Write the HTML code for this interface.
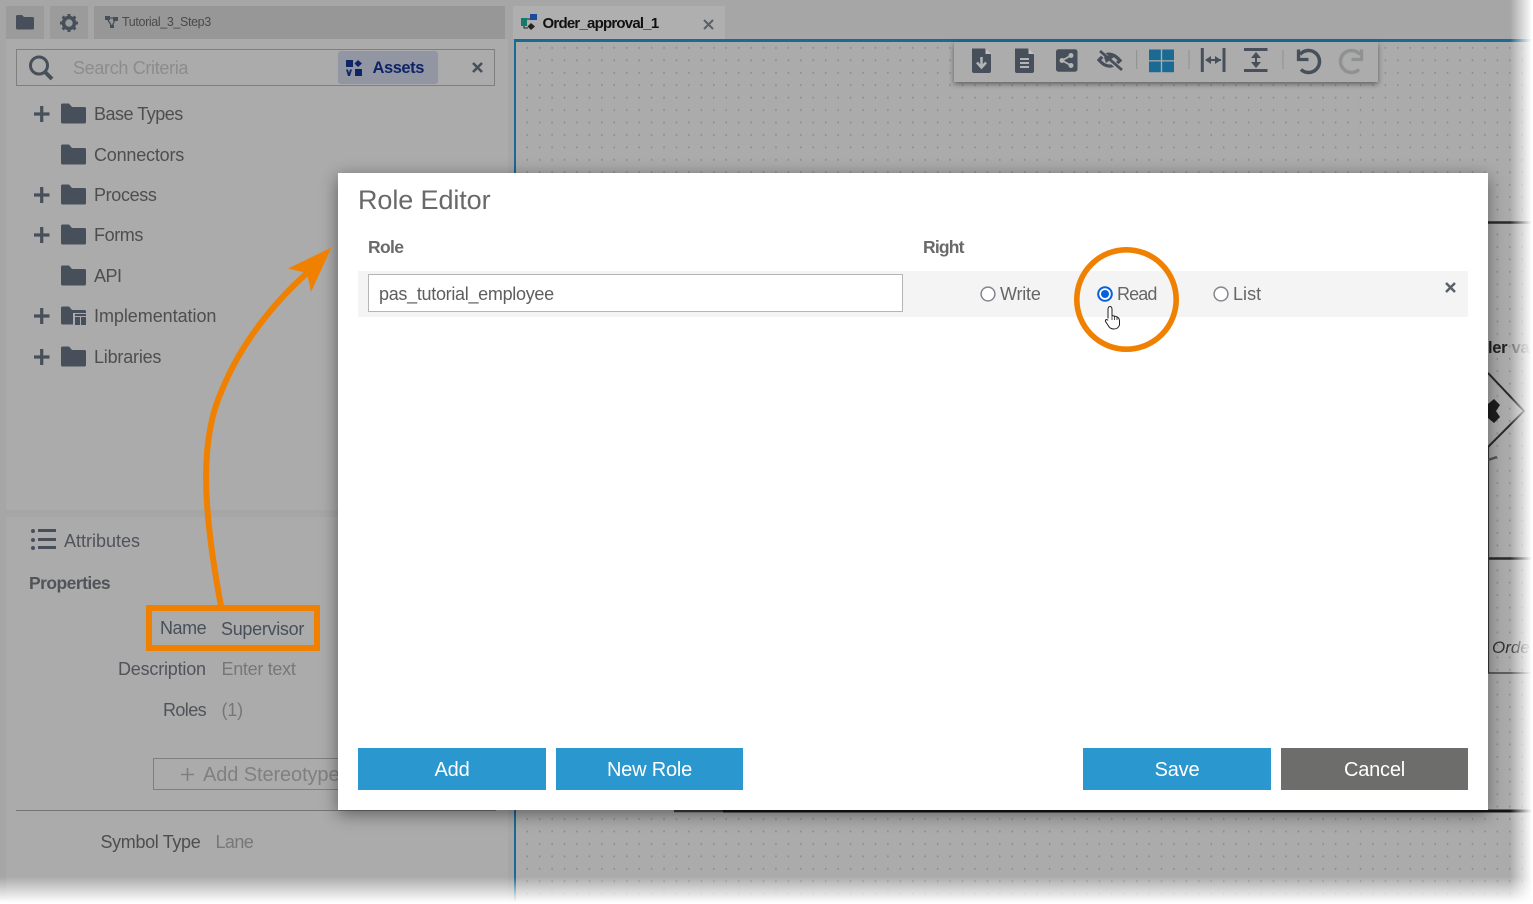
<!DOCTYPE html>
<html><head><meta charset="utf-8"><title>Role Editor</title>
<style>
*{box-sizing:border-box}
html,body{margin:0;padding:0}
body{width:1533px;height:904px;overflow:hidden;position:relative;background:#a6a6a6;font-family:"Liberation Sans",Arial,sans-serif;color:#4e4e4e}
.a{position:absolute;white-space:nowrap}
.t{position:absolute;white-space:nowrap;font-size:18px;line-height:22px;letter-spacing:-.2px}
svg{position:absolute;overflow:visible}
.btn{position:absolute;top:748px;height:42px;background:#2b97cf;color:#fff;font-size:20px;line-height:44px;text-align:center;letter-spacing:-.2px}
</style></head><body>

<!-- left panel -->
<div class="a" style="left:6px;top:39px;width:502px;height:471px;background:#ababab"></div>
<div class="a" style="left:6px;top:517px;width:502px;height:387px;background:#ababab"></div>
<div class="a" style="left:6px;top:6px;width:38px;height:33px;background:#9b9b9b"></div>
<div class="a" style="left:50px;top:6px;width:38px;height:33px;background:#9b9b9b"></div>
<div class="a" style="left:94px;top:6px;width:411px;height:33px;background:#979797"></div>
<svg style="left:16px;top:15px" width="18" height="15" viewBox="0 0 18 15"><path fill="#47505a" d="M0 1.5Q0 0 1.5 0H6L8 2H16.5Q18 2 18 3.5V13Q18 14.500 16.500 14.500H1.500Q0 14.500 0 13Z"/></svg>
<svg style="left:60px;top:14px" width="18" height="18" viewBox="0 0 18 18"><circle cx="9" cy="9" r="5.500" fill="none" stroke="#47505a" stroke-width="3.600"/><path stroke="#47505a" stroke-width="3" d="M9 0V3M9 15V18M0 9H3M15 9H18M2.600 2.600L4.800 4.800M13.200 13.200L15.400 15.400M2.600 15.400L4.800 13.200M13.200 4.800L15.400 2.600"/></svg>
<svg style="left:105px;top:16px" width="13" height="12" viewBox="0 0 13 12"><path fill="#47505a" d="M0 0H5V4H0ZM8 1H13V5H8ZM5 9H9V12H5Z"/><path stroke="#47505a" stroke-width="1.300" fill="none" d="M4 2H9M2.500 3L6.500 10M10 4L7 10"/></svg>
<div class="t" style="left:122px;top:11px;font-size:12.500px;color:#4a4a4a;letter-spacing:-.37px">Tutorial_3_Step3</div>

<!-- search -->
<div class="a" style="left:16px;top:49px;width:479px;height:37px;border:1px solid #7f7f7f"></div>
<svg style="left:28px;top:55px" width="26" height="26" viewBox="0 0 26 26"><circle cx="11" cy="10.500" r="8.500" fill="none" stroke="#47505a" stroke-width="3"/><path d="M17 17L24 24" stroke="#47505a" stroke-width="4"/></svg>
<div class="t" style="left:73px;top:57px;font-size:18px;color:#8c8c8c;letter-spacing:-.33px">Search Criteria</div>
<div class="a" style="left:338px;top:51px;width:100px;height:33px;background:#9296a3;border-radius:3px"></div>
<svg style="left:346px;top:60px" width="16" height="16" viewBox="0 0 16 16"><g fill="#0e2466"><rect x="0" y="0" width="7" height="7"/><path d="M12 0L16 3.500L12 7L8.500 3.500Z"/><rect x="9" y="9" width="7" height="7"/><path d="M0 9.500H2L3 13L4 9.500H6L4 16H2Z"/></g></svg>
<div class="t" style="left:372.500px;top:57px;font-size:16.500px;font-weight:bold;color:#0e2466;letter-spacing:-.45px">Assets</div>
<svg style="left:472px;top:62px" width="11" height="11" viewBox="0 0 11 11"><path d="M1 1L10 10M10 1L1 10" stroke="#47505a" stroke-width="2.600"/></svg>

<!-- tree -->
<svg style="left:0;top:0" width="120" height="370" viewBox="0 0 120 370">
<g stroke="#47505a" stroke-width="3.200">
<path d="M34 114H49.500M41.700 106V122"/>
<path d="M34 195H49.500M41.700 187V203"/>
<path d="M34 235H49.500M41.700 227V243"/>
<path d="M34 316H49.500M41.700 308V324"/>
<path d="M34 357H49.500M41.700 349V365"/>
</g>
<g fill="#47505a">
<path d="M61 105Q61 103.500 62.500 103.500H69L72 107H84.500Q86 107 86 108.500V122Q86 123.500 84.500 123.500H62.500Q61 123.500 61 122Z"/>
<path d="M61 146Q61 144.500 62.500 144.500H69L72 148H84.500Q86 148 86 149.500V163Q86 164.500 84.500 164.500H62.500Q61 164.500 61 163Z"/>
<path d="M61 186Q61 184.500 62.500 184.500H69L72 188H84.500Q86 188 86 189.500V203Q86 204.500 84.500 204.500H62.500Q61 204.500 61 203Z"/>
<path d="M61 226Q61 224.500 62.500 224.500H69L72 228H84.500Q86 228 86 229.500V243Q86 244.500 84.500 244.500H62.500Q61 244.500 61 243Z"/>
<path d="M61 267Q61 265.500 62.500 265.500H69L72 269H84.500Q86 269 86 270.500V284Q86 285.500 84.500 285.500H62.500Q61 285.500 61 284Z"/>
<path d="M61 308Q61 306.500 62.500 306.500H69L72 310H84.500Q86 310 86 311.500V313H73V324.500H62.500Q61 324.500 61 323Z"/>
<path d="M75 317H80V325H75ZM81 317H86V325H81ZM75 314H86V316H75Z"/>
<path d="M61 348Q61 346.500 62.500 346.500H69L72 350H84.500Q86 350 86 351.500V365Q86 366.500 84.500 366.500H62.500Q61 366.500 61 365Z"/>
</g></svg>
<div class="t" style="left:94px;top:103px;letter-spacing:-.5px">Base Types</div>
<div class="t" style="left:94px;top:144px">Connectors</div>
<div class="t" style="left:94px;top:184px;letter-spacing:-.35px">Process</div>
<div class="t" style="left:94px;top:224px;letter-spacing:-.4px">Forms</div>
<div class="t" style="left:94px;top:265px;letter-spacing:-.5px">API</div>
<div class="t" style="left:94px;top:305px;letter-spacing:-.05px">Implementation</div>
<div class="t" style="left:94px;top:346px">Libraries</div>

<!-- attributes -->
<svg style="left:30px;top:528px" width="27" height="22" viewBox="0 0 27 22"><g fill="#47505a"><circle cx="3" cy="3" r="2"/><circle cx="3" cy="12" r="2"/><circle cx="3" cy="20" r="2"/><rect x="8" y="1" width="18" height="3"/><rect x="8" y="10" width="18" height="3"/><rect x="8" y="18" width="18" height="3"/></g></svg>
<div class="t" style="left:64px;top:530px;color:#50545a;letter-spacing:0">Attributes</div>
<div class="t" style="left:29px;top:572px;font-weight:bold;color:#50545a;font-size:17.500px;letter-spacing:-.55px">Properties</div>
<div class="t" style="left:160px;top:617px;color:#47505a;letter-spacing:-.45px">Name</div>
<div class="t" style="left:221px;top:618px;color:#47505a;letter-spacing:-.3px">Supervisor</div>
<div class="t" style="left:118px;top:658px;color:#50545a">Description</div>
<div class="t" style="left:221.500px;top:658px;color:#777;letter-spacing:-.3px">Enter text</div>
<div class="t" style="left:163px;top:699px;color:#50545a;letter-spacing:-.6px">Roles</div>
<div class="t" style="left:221.500px;top:699px;color:#777">(1)</div>
<div class="a" style="left:153px;top:758px;width:200px;height:32px;border:1px solid #7f7f7f"></div>
<svg style="left:181px;top:768px" width="13" height="13" viewBox="0 0 13 13"><path d="M0 6.500H13M6.500 0V13" stroke="#7f7f7f" stroke-width="1.600"/></svg>
<div class="t" style="left:203px;top:764px;font-size:20px;color:#808080;letter-spacing:-.1px">Add Stereotype</div>
<div class="a" style="left:16px;top:810px;width:480px;height:1px;background:#757575"></div>
<div class="t" style="left:100.500px;top:831px;color:#4e4e4e;letter-spacing:-.35px">Symbol Type</div>
<div class="t" style="left:215.500px;top:831px;color:#777;letter-spacing:-.6px">Lane</div>

<!-- canvas -->
<div class="a" style="left:513px;top:6px;width:212px;height:33px;background:#afafaf"></div>
<div class="a" style="left:514px;top:39px;width:1019px;height:865px;background-color:#ababab;background-image:radial-gradient(ellipse 1px 1.300px at center,#8b8b8b 0,#8b8b8b 60%,transparent 100%);background-size:12.440px 12.440px;background-position:7px 2.700px"></div>
<div class="a" style="left:514px;top:39px;width:1019px;height:3px;background:#1a6a93"></div>
<div class="a" style="left:514px;top:39px;width:2px;height:865px;background:#1a6a93"></div>
<svg style="left:521px;top:14px" width="18" height="17" viewBox="0 0 18 17"><rect x="0" y="4" width="6" height="8" fill="#137a6b"/><rect x="9" y="0" width="7" height="6" fill="#1a4a9c"/><path d="M10 9L14 12.500L10 16L6.500 12.500Z" fill="#222"/><path d="M6 5H9M3 12V14H7" stroke="#222" fill="none"/></svg>
<div class="t" style="left:542.500px;top:13px;font-size:15px;font-weight:bold;color:#111;letter-spacing:-.78px">Order_approval_1</div>
<svg style="left:703px;top:19px" width="11" height="11" viewBox="0 0 11 11"><path d="M1 1L10 10M10 1L1 10" stroke="#5a6068" stroke-width="2"/></svg>

<!-- toolbar -->
<div class="a" style="left:954px;top:42px;width:424px;height:40px;background:#acacac;box-shadow:0 2px 5px rgba(0,0,0,.45)"></div>
<svg style="left:954px;top:42px" width="424" height="40" viewBox="0 0 424 40">
<g fill="#47505a">
<path d="M18 6.500H31L37 12.500V29Q37 31 35 31H20Q18 31 18 29Z"/>
<path d="M61 6.500H74L80 12.500V29Q80 31 78 31H63Q61 31 61 29Z"/>
<rect x="102" y="7.300" width="21.500" height="22.400" rx="2.500"/>
</g>
<path d="M27.500 15V25M23 20.500L27.500 25.500L32 20.500" fill="none" stroke="#b4b4b4" stroke-width="2.500"/>
<path d="M31.500 6.500V12H37Z" fill="#c0c0c0"/><path d="M74.500 6.500V12H80Z" fill="#c0c0c0"/>
<path d="M66 17H75M66 21H75M66 25H75" stroke="#b4b4b4" stroke-width="2"/>
<g fill="#b4b4b4"><circle cx="108" cy="18.500" r="2.500"/><circle cx="117" cy="13.500" r="2.500"/><circle cx="117" cy="23.500" r="2.500"/></g>
<path d="M108 18.500L117 13.500M108 18.500L117 23.500" stroke="#b4b4b4" stroke-width="1.600"/>
<path d="M145 18Q155 6 166 18.500Q155 30 145 18Z" fill="none" stroke="#47505a" stroke-width="3.300"/>
<path d="M144 8L170 30" stroke="#acacac" stroke-width="5"/>
<path d="M146 9L168 28" stroke="#47505a" stroke-width="2.800"/>
<path d="M150 15Q155 12 160 15L152 21Z" fill="#47505a"/>
<path d="M182.700 8V27M235 8V27M329 8V27" stroke="#8f8f8f" stroke-width="1"/>
<g fill="#1a6a93"><rect x="195" y="7.500" width="11.800" height="10.700"/><rect x="208.200" y="7.500" width="11.800" height="10.700"/><rect x="195" y="19.500" width="11.800" height="10.700"/><rect x="208.200" y="19.500" width="11.800" height="10.700"/></g>
<g stroke="#47505a" fill="none">
<path d="M248.300 6V30M270 6V30" stroke-width="3"/>
<path d="M252 18H267" stroke-width="2"/>
<path d="M290 7.500H313.500M290 28.500H313.500" stroke-width="3"/>
<path d="M302 12V24" stroke-width="2"/>
</g>
<g fill="#47505a">
<path d="M251 18L257 14V22Z"/><path d="M267 18L261 14V22Z"/>
<path d="M302 10L307 16H297Z"/><path d="M302 26L307 20H297Z"/>
</g>
<path d="M344.500 7.500V17.500H354.500" fill="none" stroke="#47505a" stroke-width="3.300"/>
<path d="M346 12.500A11 11 0 1 1 347 27.500" fill="none" stroke="#47505a" stroke-width="3.500"/>
<path d="M407.500 7.500V17.500H397.500" fill="none" stroke="#8f9193" stroke-width="3.300"/>
<path d="M406 12.500A11 11 0 1 0 405 27.500" fill="none" stroke="#8f9193" stroke-width="3.500"/>
</svg>

<!-- diagram behind dialog -->
<svg style="left:0;top:0" width="1533" height="904" viewBox="0 0 1533 904">
<g stroke="#2a2a2a" fill="none">
<path d="M1488 222.500H1533M1488 558.500H1533" stroke-width="2.500"/>
<path d="M1488 673H1533" stroke-width="1.500" stroke="#444"/>
<path d="M1488.500 447V673" stroke-width="1.200" stroke="#3a3a3a"/>
<path d="M1488 373L1524 411L1488 447" stroke-width="2"/>
<path d="M1488 460L1497 457" stroke-width="2.500" stroke="#555"/>
<path d="M674 811H723" stroke-width="2.500" stroke="#3c3c3c"/>
<path d="M723 811H1533" stroke-width="3" stroke="#151515"/>
</g>
<path d="M1488 404L1494 399L1500 405L1496 411L1500 417L1494 423L1488 418Z" fill="#1d1d1d"/>
</svg>
<div class="t" style="left:1488px;top:337px;font-weight:bold;font-size:16.500px;color:#222;letter-spacing:-.3px;width:45px;overflow:hidden">ler <span style="color:#666">va</span></div>
<div class="t" style="left:1492px;top:637px;font-style:italic;font-size:17px;color:#333;letter-spacing:0">Orde</div>

<!-- edge fades -->
<div class="a" style="left:1510px;top:0;width:23px;height:904px;background:linear-gradient(to right,rgba(255,255,255,0),#fff 96%)"></div>
<div class="a" style="left:0;top:877px;width:1533px;height:27px;background:linear-gradient(to bottom,rgba(255,255,255,0),#fff 95%)"></div>

<!-- dialog -->
<div class="a" style="left:338px;top:173px;width:1150px;height:637px;background:#fff;box-shadow:0 4px 16px 0 rgba(0,0,0,.45)"></div>
<div class="t" style="left:358px;top:184px;font-size:27px;line-height:32px;color:#696969;letter-spacing:-.1px">Role Editor</div>
<div class="t" style="left:368px;top:236px;font-size:17.500px;font-weight:bold;color:#6a6a6a;letter-spacing:-.65px">Role</div>
<div class="t" style="left:923px;top:236px;font-size:17.500px;font-weight:bold;color:#6a6a6a;letter-spacing:-.8px">Right</div>
<div class="a" style="left:358px;top:271px;width:1110px;height:46px;background:#f4f4f4"></div>
<div class="a" style="left:368px;top:274px;width:535px;height:38px;background:#fff;border:1px solid #b5b5b5"></div>
<div class="t" style="left:379px;top:283px;color:#5e5e5e;letter-spacing:-.3px">pas_tutorial_employee</div>
<svg style="left:980px;top:286px" width="16" height="16" viewBox="0 0 16 16"><circle cx="8" cy="8" r="6.900" fill="#fff" stroke="#85858f" stroke-width="1.500"/></svg>
<div class="t" style="left:1000px;top:283px;color:#666">Write</div>
<svg style="left:1097px;top:286px" width="16" height="16" viewBox="0 0 16 16"><circle cx="8" cy="8" r="6.800" fill="#fff" stroke="#0860dc" stroke-width="2"/><circle cx="8" cy="8" r="4" fill="#0860dc"/></svg>
<div class="t" style="left:1117px;top:283px;color:#666;letter-spacing:-.9px">Read</div>
<svg style="left:1213px;top:286px" width="16" height="16" viewBox="0 0 16 16"><circle cx="8" cy="8" r="6.900" fill="#fff" stroke="#85858f" stroke-width="1.500"/></svg>
<div class="t" style="left:1233px;top:283px;color:#666;letter-spacing:.05px">List</div>
<svg style="left:1445px;top:282px" width="11" height="11" viewBox="0 0 11 11"><path d="M1 1L10 10M10 1L1 10" stroke="#5a6068" stroke-width="2.500"/></svg>
<div class="btn" style="left:358px;width:188px">Add</div>
<div class="btn" style="left:556px;width:187px">New Role</div>
<div class="btn" style="left:1083px;width:188px">Save</div>
<div class="btn" style="left:1281px;width:187px;background:#6d6e6b">Cancel</div>

<!-- annotations -->
<svg style="left:0;top:0" width="1533" height="904" viewBox="0 0 1533 904">
<rect x="149" y="608" width="168" height="40" fill="none" stroke="#f08000" stroke-width="6"/>
<path d="M221 606C203 510 199 440 222 390C238 350 268 308 307 273" fill="none" stroke="#f08000" stroke-width="6"/>
<path d="M331.500 247.500L288 268.500L307 273L311 292Z" fill="#f08000"/>
<circle cx="1126.500" cy="299.500" r="49.700" fill="none" stroke="#f08000" stroke-width="5.600"/>
<path d="M1108 318.500V309.500Q1108 306.500 1110 306.500Q1112 306.500 1112 309.500V315.500L1116 316.500Q1119.500 317.500 1119.500 321V325Q1118 329 1114 329Q1110 329 1108.500 326L1105.500 321.500Q1105 320 1106.500 319.500Q1107.500 319.500 1108 320.500" fill="#fff" stroke="#222" stroke-width="1"/>
<path d="M1112 316V320M1114.500 316.500V320M1117 317V320" stroke="#222" stroke-width=".8"/>
</svg>
</body></html>
